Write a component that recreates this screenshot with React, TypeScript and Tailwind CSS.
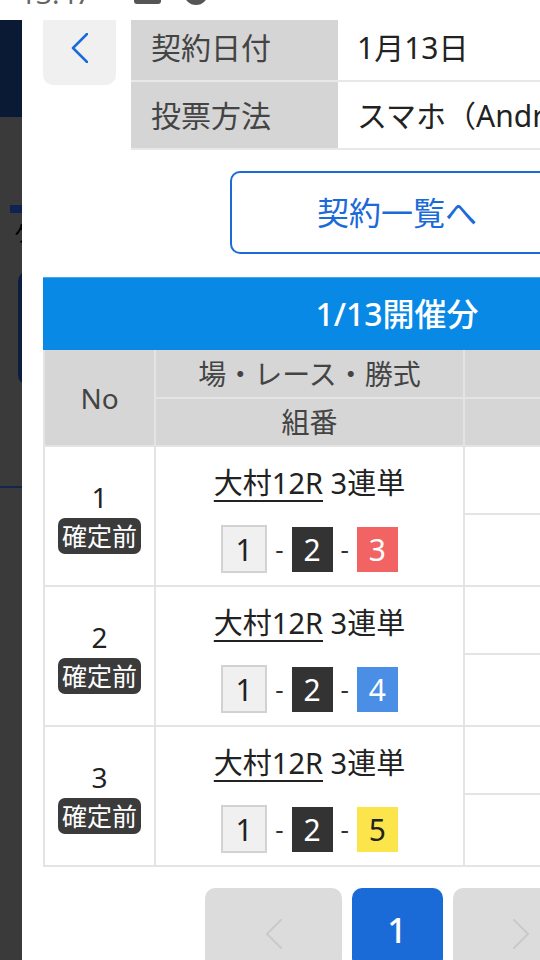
import React from "react";

function Chevron({ dir, color, w, h, sw }: { dir: "left" | "right"; color: string; w: number; h: number; sw: number }) {
  const pts = dir === "left" ? `${w - 1},1 2,${h / 2} ${w - 1},${h - 1}` : `1,1 ${w - 2},${h / 2} 1,${h - 1}`;
  return (
    <svg width={w} height={h} viewBox={`0 0 ${w} ${h}`} fill="none">
      <polyline points={pts} stroke={color} strokeWidth={sw} strokeLinecap="round" strokeLinejoin="round" />
    </svg>
  );
}

export default function App() {
  const rows = [
    { no: 1, third: 3, thirdCls: "bg-[#f26363] text-white" },
    { no: 2, third: 4, thirdCls: "bg-[#4a8ee6] text-white" },
    { no: 3, third: 5, thirdCls: "bg-[#fbe54a] text-[#222]" },
  ];
  return (
    <div className="w-[540px] h-[960px] overflow-hidden bg-white flex flex-col font-['Noto_Sans','Noto_Sans_CJK_JP',sans-serif]">
      {/* status bar */}
      <div className="h-[20px] shrink-0 overflow-hidden flex items-start">
        <span className="ml-[20px] -mt-[21px] text-[28px] leading-none text-[#666]">13:47</span>
        <div className="ml-[42px] -mt-[16px] w-[27px] h-[20px] rounded-[3px] bg-[#555]" />
        <div className="ml-[23px] -mt-[19px] w-[24px] h-[24px] rounded-full bg-[#555]" />
      </div>

      <div className="flex flex-1 min-h-0">
        {/* dimmed background strip */}
        <div className="w-[22px] shrink-0 bg-[#3a3a3a] overflow-hidden flex flex-col">
          <div className="h-[97px] bg-[#0b1a34]" />
          <div className="mt-[88px] ml-[10px] w-[12px] h-[8px] bg-[#0e2352]" />
          <span className="mt-[6px] ml-[14px] text-[22px] leading-[26px] text-black whitespace-nowrap">ゲ</span>
          <div className="mt-[26px] ml-[18px] w-[20px] h-[114px] shrink-0 rounded-l-[10px] bg-[#0d1d3d]" />
          <div className="mt-[101px] h-[2px] bg-[#14264c]" />
        </div>

        {/* main panel */}
        <div className="flex-1 min-w-0 overflow-hidden pl-[21px] bg-white">
          {/* top row */}
          <div className="flex items-start">
            <div className="w-[73px] h-[65px] shrink-0 bg-[#f0f0f0] rounded-b-[10px] flex justify-center pt-[13px]">
              <Chevron dir="left" color="#1a6ad8" w={17} h={30} sw={2.5} />
            </div>
            <div className="ml-[15px] w-[480px] shrink-0 grid grid-cols-[207px_1fr] gap-y-[2px] pb-[2px] bg-[#e8e8e8]">
              <div className="h-[60px] pb-[5px] bg-[#d5d5d5] pl-[20px] flex items-center text-[30px] text-[#444] whitespace-nowrap">契約日付</div>
              <div className="h-[60px] pb-[5px] bg-white pl-[19px] flex items-center text-[30px] text-[#222] whitespace-nowrap">1月13日</div>
              <div className="h-[66px] bg-[#d5d5d5] pl-[20px] flex items-center text-[30px] text-[#444] whitespace-nowrap">投票方法</div>
              <div className="h-[66px] bg-white pl-[19px] flex items-center text-[30px] text-[#222] whitespace-nowrap">スマホ（Android）</div>
            </div>
          </div>

          {/* content */}
          <div className="w-[708px] flex flex-col items-center">
            <div className="mt-[21px] w-[334px] h-[83px] border-2 border-[#1a6ad8] rounded-[10px] text-[#1a6ad8] text-[32px] flex items-center justify-center">
              契約一覧へ
            </div>

            <div className="mt-[23px] self-stretch h-[73px] bg-[#0989e6] border-t border-[#4aa6ee] text-white text-[32px] font-medium flex items-center justify-center">
              1/13開催分
            </div>

            <div className="self-stretch grid grid-cols-[109px_307px_1fr] gap-[2px] px-[2px] pb-[2px] bg-[#e4e4e4]">
              {/* header */}
              <div className="row-span-2 bg-[#d6d6d6] flex items-center justify-center text-[28px] text-[#444]">No</div>
              <div className="h-[47px] bg-[#d6d6d6] flex items-center justify-center text-[28px] text-[#444] whitespace-nowrap">場・レース・勝式</div>
              <div className="h-[47px] bg-[#d6d6d6]" />
              <div className="h-[46px] bg-[#d6d6d6] flex items-center justify-center text-[28px] text-[#444]">組番</div>
              <div className="h-[46px] bg-[#d6d6d6]" />

              {rows.map((r) => (
                <React.Fragment key={r.no}>
                  <div className="h-[138px] bg-white flex flex-col items-center justify-center">
                    <span className="text-[28px] leading-[36px] text-[#222]">{r.no}</span>
                    <span className="mt-[3px] px-[4px] rounded-[7px] bg-[#3b3b3b] text-white text-[25px] leading-[36px] whitespace-nowrap">確定前</span>
                  </div>
                  <div className="bg-white flex flex-col items-center justify-center gap-[22px]">
                    <div className="mt-[4px] text-[29px] leading-[40px] text-[#222] whitespace-nowrap">
                      <span className="underline decoration-2 underline-offset-[6px]">大村12R</span> 3連単
                    </div>
                    <div className="flex items-center text-[#333]">
                      <div className="w-[46px] h-[48px] border-2 border-[#d2d2d2] bg-[#f0f0f0] flex items-center justify-center text-[30px] text-[#222]">1</div>
                      <span className="mx-[8px] text-[26px]">-</span>
                      <div className="w-[41px] h-[45px] bg-[#333] flex items-center justify-center text-[30px] text-white">2</div>
                      <span className="mx-[8px] text-[26px]">-</span>
                      <div className={`w-[41px] h-[45px] flex items-center justify-center text-[30px] ${r.thirdCls}`}>{r.third}</div>
                    </div>
                  </div>
                  <div className="flex flex-col gap-[2px]">
                    <div className="h-[66px] bg-white" />
                    <div className="flex-1 bg-white" />
                  </div>
                </React.Fragment>
              ))}
            </div>

            {/* pagination */}
            <div className="mt-[21px] flex gap-[10px]">
              <div className="w-[137px] h-[80px] bg-[#dcdcdc] rounded-[10px] flex justify-center pt-[31px]">
                <Chevron dir="left" color="#c9c9c9" w={17} h={30} sw={2} />
              </div>
              <div className="w-[91px] h-[80px] bg-[#1a6ad8] rounded-[10px] flex justify-center pt-[22px] text-white text-[34px] leading-[40px] font-medium">
                1
              </div>
              <div className="w-[137px] h-[80px] bg-[#dcdcdc] rounded-[10px] flex justify-center pt-[31px]">
                <Chevron dir="right" color="#c9c9c9" w={17} h={30} sw={2} />
              </div>
            </div>
          </div>
        </div>
      </div>
    </div>
  );
}
